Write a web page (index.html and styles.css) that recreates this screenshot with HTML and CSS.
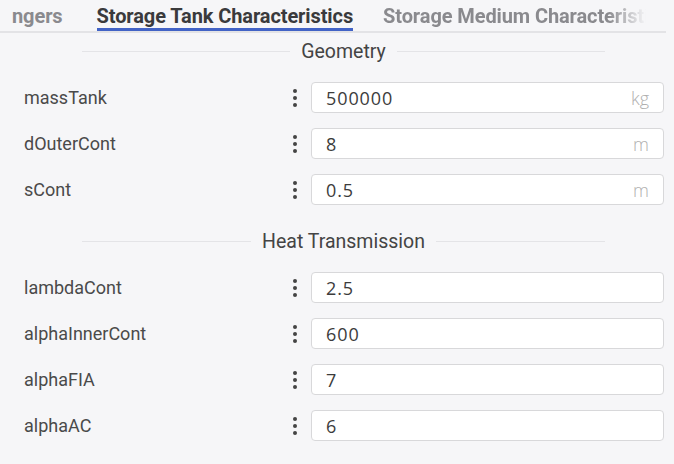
FILE: index.html
```html
<!DOCTYPE html>
<html>
<head>
<meta charset="UTF-8" />
<title>Storage Tank Characteristics</title>
<link rel="stylesheet" href="styles.css">
</head>
<body>
<div class="tabs">
  <div class="tab cut">ngers</div>
  <div class="tab active">Storage Tank Characteristics</div>
  <div class="tab fade">Storage Medium Characteristics</div>
</div>

<div class="divider"><span>Geometry</span></div>
<div class="rows">
  <div class="row">
    <div class="label">massTank</div>
    <div class="dots"><i></i><i></i><i></i></div>
    <div class="field"><span class="value">500000</span><span class="unit">kg</span></div>
  </div>
  <div class="row">
    <div class="label">dOuterCont</div>
    <div class="dots"><i></i><i></i><i></i></div>
    <div class="field"><span class="value">8</span><span class="unit">m</span></div>
  </div>
  <div class="row">
    <div class="label">sCont</div>
    <div class="dots"><i></i><i></i><i></i></div>
    <div class="field"><span class="value">0.5</span><span class="unit">m</span></div>
  </div>
</div>

<div class="divider second"><span>Heat Transmission</span></div>
<div class="rows">
  <div class="row">
    <div class="label">lambdaCont</div>
    <div class="dots"><i></i><i></i><i></i></div>
    <div class="field"><span class="value">2.5</span></div>
  </div>
  <div class="row">
    <div class="label">alphaInnerCont</div>
    <div class="dots"><i></i><i></i><i></i></div>
    <div class="field"><span class="value">600</span></div>
  </div>
  <div class="row">
    <div class="label">alphaFIA</div>
    <div class="dots"><i></i><i></i><i></i></div>
    <div class="field"><span class="value">7</span></div>
  </div>
  <div class="row">
    <div class="label">alphaAC</div>
    <div class="dots"><i></i><i></i><i></i></div>
    <div class="field"><span class="value">6</span></div>
  </div>
</div>
</body>
</html>
```

FILE: styles.css
```css
body { margin: 0; background: #f6f6f8; font-family: Roboto, "Liberation Sans", sans-serif; color: #444; }

/* tab strip */
div.tabs { display: flex; height: 31px; margin-right: 8px; border-bottom: 2px solid #e3e3e6; overflow: hidden; white-space: nowrap; }
div.tab { padding: 0 15px; font-size: 20px; font-weight: bold; line-height: 32px; color: #8a8a8e; flex: none; letter-spacing: -0.1px; }
div.tab.cut { padding: 0 19px 0 12px; }
div.tab.active { color: #3a3a3c; box-shadow: inset 0 -3px 0 #4263c6; padding: 0; margin: 0 15px; }
div.tab.fade { -webkit-mask-image: linear-gradient(to right, #000 240px, transparent 278px); mask-image: linear-gradient(to right, #000 240px, transparent 278px); }

/* section headings */
div.divider { display: flex; align-items: center; gap: 11px; margin: 6px 69px 19px 82px; height: 24px; font-size: 19.5px; color: #444; }
div.divider::before, div.divider::after { content: ""; flex: 1; border-top: 1px solid #e4e4e7; }
div.divider.second { margin-top: 24px; }

/* parameter rows */
div.rows { display: flex; flex-direction: column; gap: 15px; padding: 0 10px 0 24px; }
div.row { display: grid; grid-template-columns: 264px 23px 1fr; align-items: center; height: 31px; }
div.label { font-size: 18px; color: #4a4a4a; }
div.dots { display: flex; flex-direction: column; gap: 3px; padding-left: 5px; }
div.dots i { display: block; width: 4px; height: 4px; border-radius: 50%; background: #444; }
div.field { display: flex; align-items: center; justify-content: space-between; height: 29px; padding: 0 14px; background: #fff; border: 1px solid #d8d8da; border-radius: 4px; font-family: "Open Sans", sans-serif; font-size: 18px; }
span.value { color: #3c3c3c; letter-spacing: 0.9px; }
span.unit { color: #b0b0b0; font-weight: 300; }
```
